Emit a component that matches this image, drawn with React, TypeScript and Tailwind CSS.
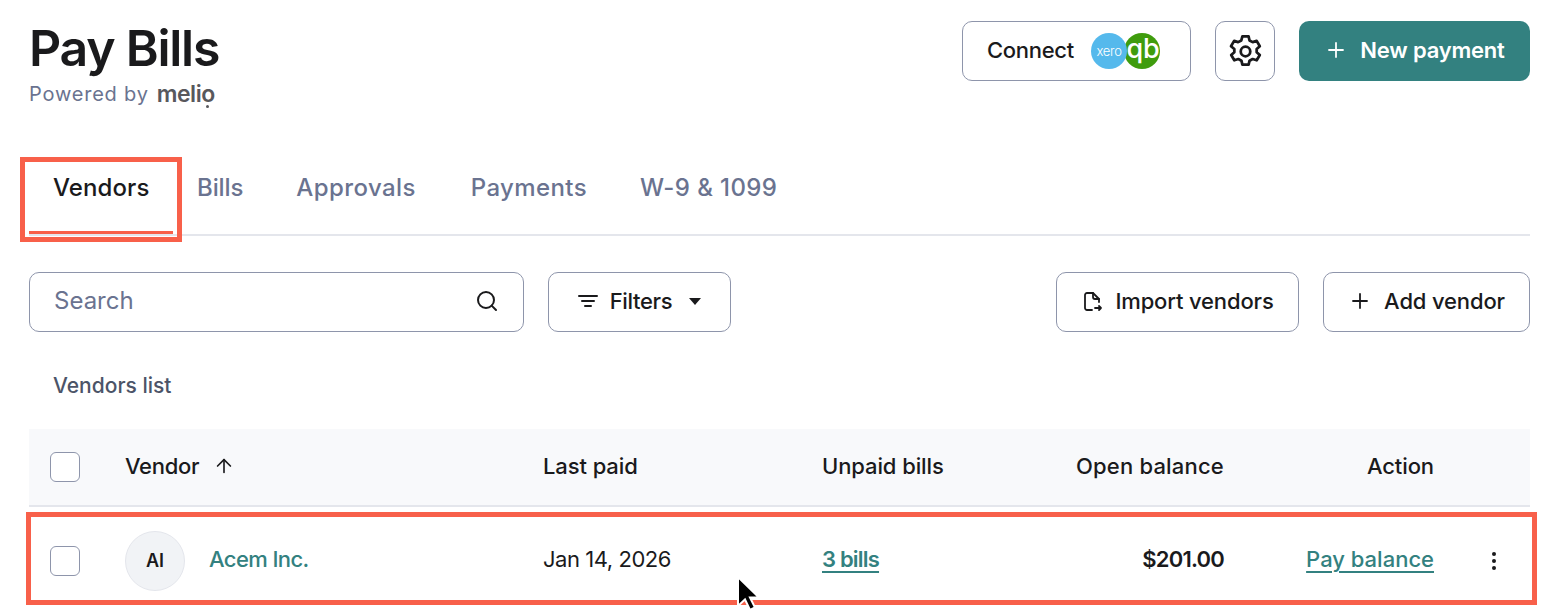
import React from "react";
import { Plus, Search, ArrowUp } from "lucide-react";

const font = { fontFamily: '"Inter", "Liberation Sans", sans-serif' };

const tabs = [
  { label: "Bills", cls: "px-[24px] pt-[4px] tracking-[-0.1px]" },
  { label: "Approvals", cls: "ml-[5px] px-[24px] pt-[4px]" },
  { label: "Payments", cls: "ml-[7px] px-[24px] pt-[4px]" },
  { label: "W-9 & 1099", cls: "ml-[5px] px-[24px] pt-[4px]" },
];

function GearIcon() {
  return (
    <svg width="33" height="33" viewBox="3 3 18 18" fill="none" stroke="#1a1a1c" strokeWidth="1.5" strokeLinejoin="round">
      <path d="M10.300 3.800h3.400l.5 2.200 1.700.9 2.200-.7 1.700 2.900-1.700 1.500v1.800l1.700 1.500-1.700 2.900-2.200-.7-1.700.9-.5 2.200h-3.400l-.5-2.200-1.700-.9-2.200.7-1.700-2.900 1.700-1.500v-1.800L4.100 9.100l1.700-2.900 2.200.7 1.700-.9z" />
      <circle cx="12" cy="12" r="2.600" />
    </svg>
  );
}

function ImportIcon() {
  return (
    <svg width="22" height="22" viewBox="0 0 22 22" fill="none" stroke="#1a1a1c" strokeWidth="1.8" strokeLinecap="round" strokeLinejoin="round">
      <path d="M11 20H6a2 2 0 0 1-2-2V5a2 2 0 0 1 2-2h6l6 6v3" />
      <path d="M12 3v4a2 2 0 0 0 2 2h4" />
      <path d="M14 18h6M18 16l2 2-2 2" />
    </svg>
  );
}

function FilterIcon() {
  return (
    <svg width="20" height="14" viewBox="0 0 20 14" fill="none" stroke="#1a1a1c" strokeWidth="2" strokeLinecap="round">
      <path d="M1 2h18M4 7h12M7 12h6" />
    </svg>
  );
}

function Cursor() {
  return (
    <svg width="26" height="38" viewBox="0 0 26 38" className="absolute left-[734px] top-[574px]">
      <path d="M4 3v29l7-6.500 5 10.500 5-2.500-5-10h9z" fill="#000" stroke="#fff" strokeWidth="2" />
    </svg>
  );
}

function Checkbox() {
  return <div className="h-[30px] w-[30px] rounded-[6px] border border-[#8e95ab] bg-white" />;
}

export default function App() {
  return (
    <div style={font} className="relative h-[615px] w-[1554px] overflow-hidden bg-white pl-[29px] pr-[24px] pt-[21px] text-[#1a1a1c]">
      {/* Header */}
      <div className="flex items-start justify-between">
        <div>
          <h1 className="text-[50px] font-semibold leading-[54px] tracking-[-1.25px]">Pay Bills</h1>
          <div className="mt-[6px] flex items-center gap-[8px] text-[20px] leading-[26px] tracking-[0.8px] text-[#6a7390]">
            <span>Powered by</span>
            <span className="relative text-[23px] font-semibold tracking-[-0.5px] text-[#58585c]">
              melio
              <i className="absolute bottom-[-1px] right-[6px] block h-[3px] w-[3px] rounded-full bg-[#58585c]" />
            </span>
          </div>
        </div>
        <div className="flex items-center">
          <button className="flex h-[60px] w-[229px] items-center rounded-[10px] border border-[#8e95ab] pb-[2px] pl-[24px] text-[22px] font-medium tracking-[-0.3px]">
            Connect
            <span className="ml-[16px] mt-[2px] flex items-center">
              <svg width="72" height="38" viewBox="0 0 72 38">
                <circle cx="52" cy="19" r="18" fill="#3f9c0d" />
                <text x="53" y="26" textAnchor="middle" fontSize="27" fill="#fff" fontFamily="Inter, sans-serif">qb</text>
                <circle cx="19" cy="19" r="18" fill="#55b9ec" />
                <text x="19" y="24" textAnchor="middle" fontSize="13" fontWeight="300" fill="#fff" fontFamily="Inter, sans-serif">xero</text>
              </svg>
            </span>
          </button>
          <button className="ml-[24px] flex h-[60px] w-[60px] items-center justify-center rounded-[10px] border border-[#8e95ab]">
            <GearIcon />
          </button>
          <button className="ml-[24px] flex h-[60px] w-[231px] items-center justify-center gap-[12px] rounded-[10px] bg-[#338180] pb-[2px] text-[22px] font-semibold tracking-[-0.2px] text-white">
            <Plus size={24} strokeWidth={1.8} />
            New payment
          </button>
        </div>
      </div>

      {/* Tabs */}
      <div className="mt-[59px] flex h-[70px] border-b-2 border-[#e4e6ec] text-[24px] font-medium tracking-[0.4px] text-[#6a7390]">
        <div className="h-[68px] w-[144px] border-b-[3px] border-[#f8604a] pl-[24px] pt-[4px] tracking-[0.1px] text-[#1a1a1c]">Vendors</div>
        {tabs.map((t) => (
          <div key={t.label} className={t.cls}>
            {t.label}
          </div>
        ))}
      </div>

      {/* Toolbar */}
      <div className="mt-[36px] flex h-[60px] items-stretch text-[22px]">
        <div className="flex w-[495px] items-center justify-between rounded-[10px] border border-[#8e95ab] pb-[2px] pl-[24px] pr-[24px] text-[24px] text-[#6a7390]">
          <span>Search</span>
          <Search size={24} strokeWidth={2} color="#1a1a1c" />
        </div>
        <button className="ml-[24px] flex w-[183px] items-center justify-center gap-[12px] rounded-[10px] border border-[#8e95ab] pb-[2px] font-medium tracking-[-0.35px]">
          <FilterIcon />
          Filters
          <span className="ml-[5px] h-0 w-0 border-x-[6px] border-t-[7px] border-x-transparent border-t-[#1a1a1c]" />
        </button>
        <div className="flex-1" />
        <button className="flex w-[243px] items-center justify-center gap-[12px] rounded-[10px] border border-[#8e95ab] pb-[2px] font-medium tracking-[-0.15px]">
          <ImportIcon />
          Import vendors
        </button>
        <button className="ml-[24px] flex w-[207px] items-center justify-center gap-[12px] rounded-[10px] border border-[#8e95ab] pb-[2px] font-medium tracking-[-0.15px]">
          <Plus size={24} strokeWidth={1.8} />
          Add vendor
        </button>
      </div>

      <div className="mt-[40px] pl-[24px] text-[21px] font-medium leading-[28px] text-[#4c5468]">Vendors list</div>

      {/* Table */}
      <div className="mt-[29px]">
        <div className="grid h-[78px] grid-cols-[96px_418px_279px_240px_162px_1fr] items-center border-b-2 border-[#e4e6ec] bg-[#f8f9fb] text-[22px] font-medium tracking-[-0.1px]">
          <div className="pl-[21px]"><Checkbox /></div>
          <div className="flex items-center gap-[14px] pb-[2px] tracking-[-0.3px]">
            Vendor <ArrowUp size={22} strokeWidth={1.8} />
          </div>
          <div className="pb-[2px]">Last paid</div>
          <div className="pb-[2px]">Unpaid bills</div>
          <div className="pb-[2px] text-right tracking-[0.2px]">Open balance</div>
          <div className="pb-[2px] pr-[96px] text-right">Action</div>
        </div>
        <div className="grid h-[108px] grid-cols-[96px_418px_279px_240px_162px_1fr] items-center text-[22px] font-normal">
          <div className="pl-[21px]"><Checkbox /></div>
          <div className="flex items-center gap-[24px]">
            <div className="flex h-[60px] w-[60px] items-center justify-center rounded-full border border-[#e4e6ec] bg-[#f1f3f6] pb-[2px] text-[18px] font-semibold">AI</div>
            <span className="pb-[3px] font-medium tracking-[-0.6px] text-[#338180]">Acem Inc.</span>
          </div>
          <div className="pb-[3px] tracking-[-0.45px]">Jan 14, 2026</div>
          <div className="pb-[3px] font-semibold tracking-[-0.8px] text-[#338180] underline underline-offset-4">3 bills</div>
          <div className="pb-[3px] text-right font-semibold tracking-[-0.8px]">$201.00</div>
          <div className="flex items-center justify-end pr-[34px]">
            <span className="pb-[3px] font-medium tracking-[0px] text-[#338180] underline underline-offset-4">Pay balance</span>
            <span className="ml-[58px] flex flex-col gap-[3px]">
              <i className="block h-[4px] w-[4px] rounded-full bg-[#1a1a1c]" />
              <i className="block h-[4px] w-[4px] rounded-full bg-[#1a1a1c]" />
              <i className="block h-[4px] w-[4px] rounded-full bg-[#1a1a1c]" />
            </span>
          </div>
        </div>
      </div>

      {/* Annotation boxes */}
      <div className="absolute left-[20px] top-[157px] h-[85px] w-[162px] border-[5px] border-[#f8604a]" />
      <div className="absolute left-[26px] top-[512px] h-[93px] w-[1511px] border-[5px] border-[#f8604a]" />
      <Cursor />
    </div>
  );
}
